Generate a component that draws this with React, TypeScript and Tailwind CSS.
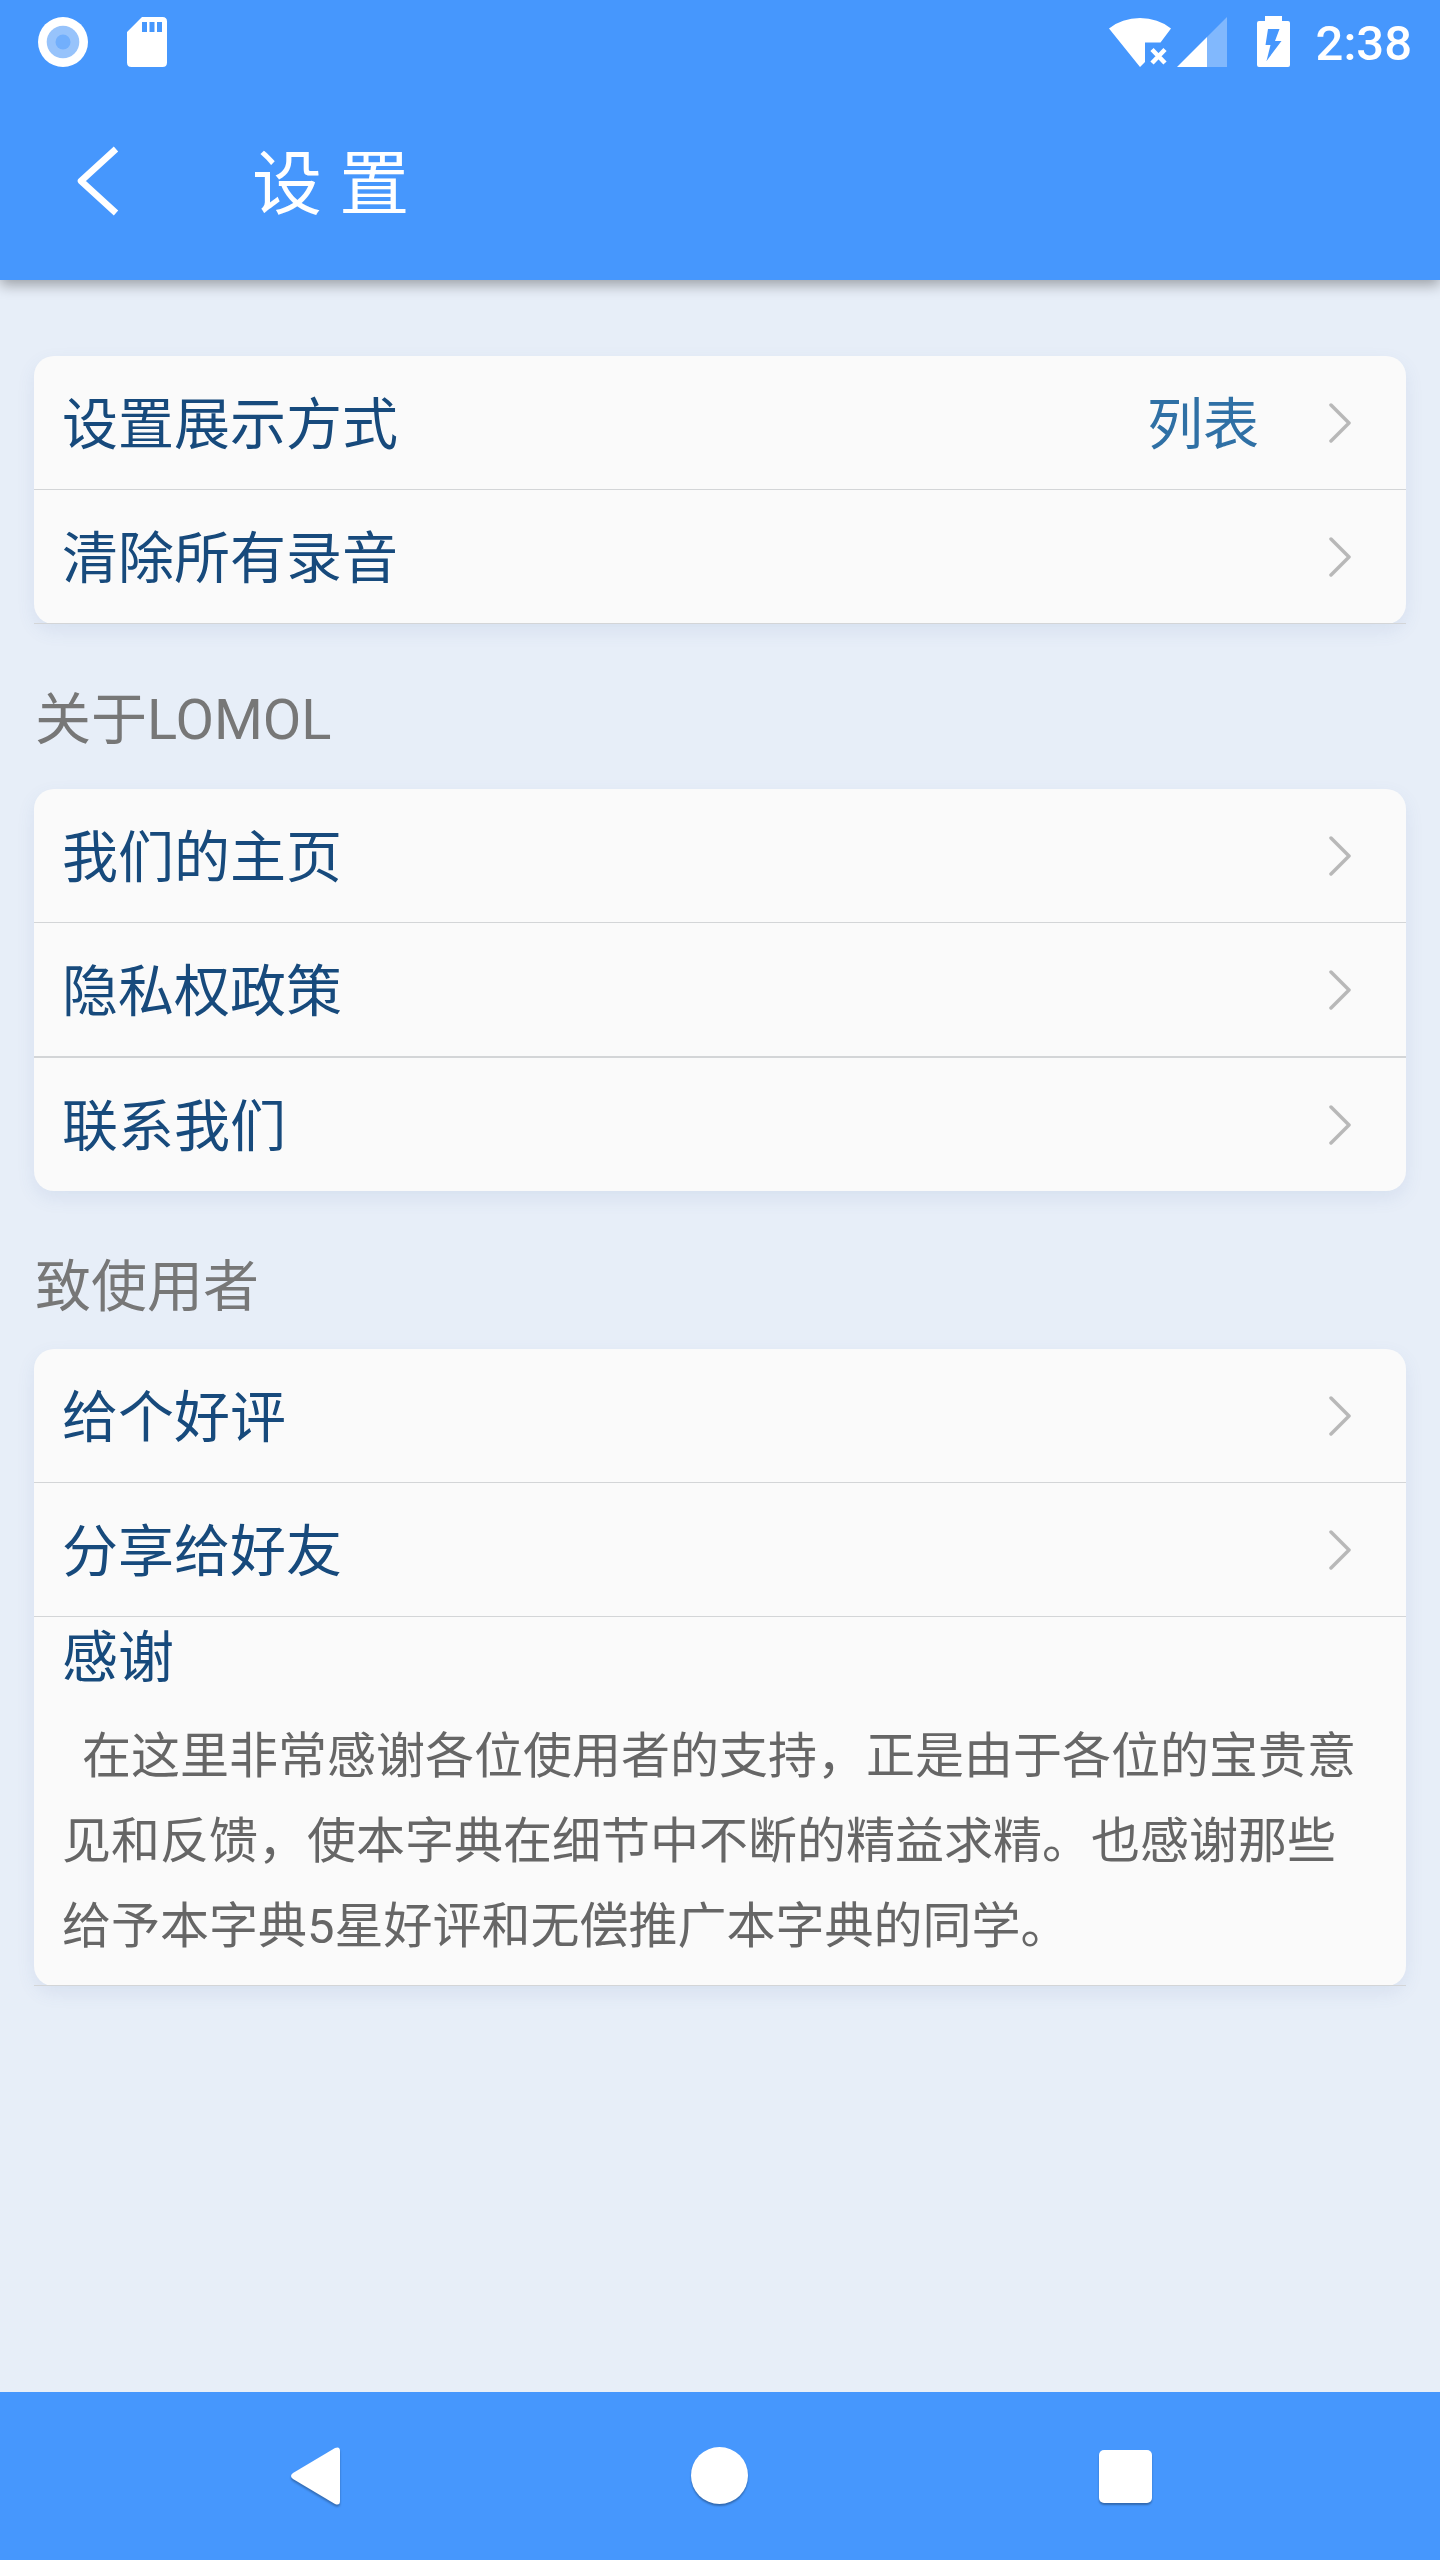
import type { ReactNode } from 'react';

function StatusBar() {
  return (
    <div className="flex h-[84px] items-center justify-between pl-[38px] pr-[28px]">
      <div className="flex items-center gap-[39px]">
        <svg width="50" height="50" viewBox="0 0 50 50">
          <circle cx="25" cy="25" r="25" fill="#fff" />
          <circle cx="25" cy="25" r="16.3" fill="#97c3fb" />
          <circle cx="25" cy="25" r="7.5" fill="#72affc" />
        </svg>
        <svg width="40" height="50" viewBox="0 0 40 50">
          <path
            fill="#fff"
            fillRule="evenodd"
            d="M15 0H35.500Q40 0 40 4.500V45.500Q40 50 35.500 50H4.500Q0 50 0 45.500V15ZM15 5V15H20V5ZM22.500 5V15H27.500V5ZM30 5V15H35V5Z"
          />
        </svg>
      </div>
      <div className="flex items-center">
        <svg width="62" height="50" viewBox="0 0 62 50" fill="#fff">
          <path d="M0 11.500Q13 1 31 1T62 11.500L51.500 25.500H36V45L31 50Z" />
          <path d="M43 32.500L56 46M56 32.500L43 46" stroke="#fff" strokeWidth="4.500" />
        </svg>
        <svg className="ml-[6px]" width="50" height="50" viewBox="0 0 50 50" fill="#fff">
          <path d="M50 0V50H30V20Z" opacity="0.32" />
          <path d="M0 50L30 20V50Z" />
        </svg>
        <svg className="ml-[30px]" width="33" height="52" viewBox="0 0 33 52" fill="#fff">
          <path
            fillRule="evenodd"
            d="M8 0H25V5H31Q33 5 33 7V49Q33 51 31 51H2Q0 51 0 49V7Q0 5 2 5H8ZM11 13L8.500 29H13.500L9.500 45L24.500 25H18L22.500 13Z"
          />
        </svg>
        <span className="ml-[26px] pt-[4px] font-['Roboto'] text-[49px] leading-[50px] font-medium">2:38</span>
      </div>
    </div>
  );
}

function Card({ children }: { children: ReactNode }) {
  return (
    <div className="rounded-[20px] bg-[#fafafa] shadow-[0_7px_18px_rgba(80,110,170,0.1)]">{children}</div>
  );
}

function Row({ label, value, line = 'border-b' }: { label: string; value?: string; line?: string }) {
  return (
    <div className={`box-content flex h-[133px] items-center border-[#d3d5d7] pl-[28px] pr-[55px] ${line}`}>
      <span className="grow pt-[4px] text-[56px] leading-[66px] text-[#174a7c]">{label}</span>
      {value && <span className="mr-[70px] pt-[4px] text-[56px] leading-[66px] text-[#2f70a5]">{value}</span>}
      <svg width="22" height="40" viewBox="0 0 22 40" fill="none" stroke="#b8b8b8" strokeWidth="3.500" strokeLinecap="round" strokeLinejoin="round">
        <path d="M2 2L20 20L2 38" />
      </svg>
    </div>
  );
}

export default function App() {
  return (
    <div className="flex h-[2560px] w-[1440px] flex-col bg-[#e7eef8] font-['Roboto','Noto_Sans_CJK_SC',sans-serif]">
      <header className="h-[280px] shrink-0 bg-[#4697fd] text-white shadow-[0_5px_13px_rgba(0,0,0,0.33)]">
        <StatusBar />
        <div className="flex h-[196px] items-center pl-[76px]">
          <svg className="mb-[2px]" width="44" height="72" viewBox="0 0 44 72" fill="none" stroke="#fff" strokeWidth="6.500" strokeLinejoin="round">
            <path d="M40 4L5 36L40 68" />
          </svg>
          <h1 className="ml-[132px] pt-[5px] text-[70px] leading-[82px]">设 置</h1>
        </div>
      </header>

      <main className="grow px-[34px] pt-[76px]">
        <Card>
          <Row label="设置展示方式" value="列表" />
          <Row label="清除所有录音" />
        </Card>

        <h2 className="mt-[64px] mb-[36px] pl-[1px] text-[56px] leading-[65px] text-[#777777]">关于LOMOL</h2>
        <Card>
          <Row label="我们的主页" />
          <Row label="隐私权政策" line="border-b-2" />
          <Row label="联系我们" line="border-b-0" />
        </Card>

        <h2 className="mt-[64px] mb-[29px] pl-[1px] text-[56px] leading-[65px] text-[#777777]">致使用者</h2>
        <Card>
          <Row label="给个好评" />
          <Row label="分享给好友" />
          <div className="h-[369px] border-b border-[#d3d5d7] pl-[28px] pt-[8px]">
            <h3 className="text-[56px] leading-[66px] text-[#174a7c]">感谢</h3>
            <p className="mt-[23px] text-[49px] leading-[85px] whitespace-pre text-[#666]">
              <span className="block indent-[20px]">在这里非常感谢各位使用者的支持，正是由于各位的宝贵意</span>
              <span className="block">见和反馈，使本字典在细节中不断的精益求精。也感谢那些</span>
              <span className="block">给予本字典5星好评和无偿推广本字典的同学。</span>
            </p>
          </div>
        </Card>
      </main>

      <nav className="flex h-[168px] shrink-0 items-center bg-[#4697fd] pl-[290px]">
        <svg className="drop-shadow-[0_2px_1px_rgba(0,0,0,0.3)]" width="51" height="60" viewBox="0 0 51 60" fill="#fff">
          <path d="M3 27L45 2Q50 0 50 5V55Q50 60 45 58L3 33Q-1 30 3 27Z" />
        </svg>
        <div className="mb-[2px] ml-[350px] h-[57px] w-[57px] rounded-full bg-white shadow-[0_2px_2px_rgba(0,0,0,0.3)]" />
        <div className="ml-[351px] h-[53px] w-[53px] rounded-[5px] bg-white shadow-[0_2px_2px_rgba(0,0,0,0.3)]" />
      </nav>
    </div>
  );
}
